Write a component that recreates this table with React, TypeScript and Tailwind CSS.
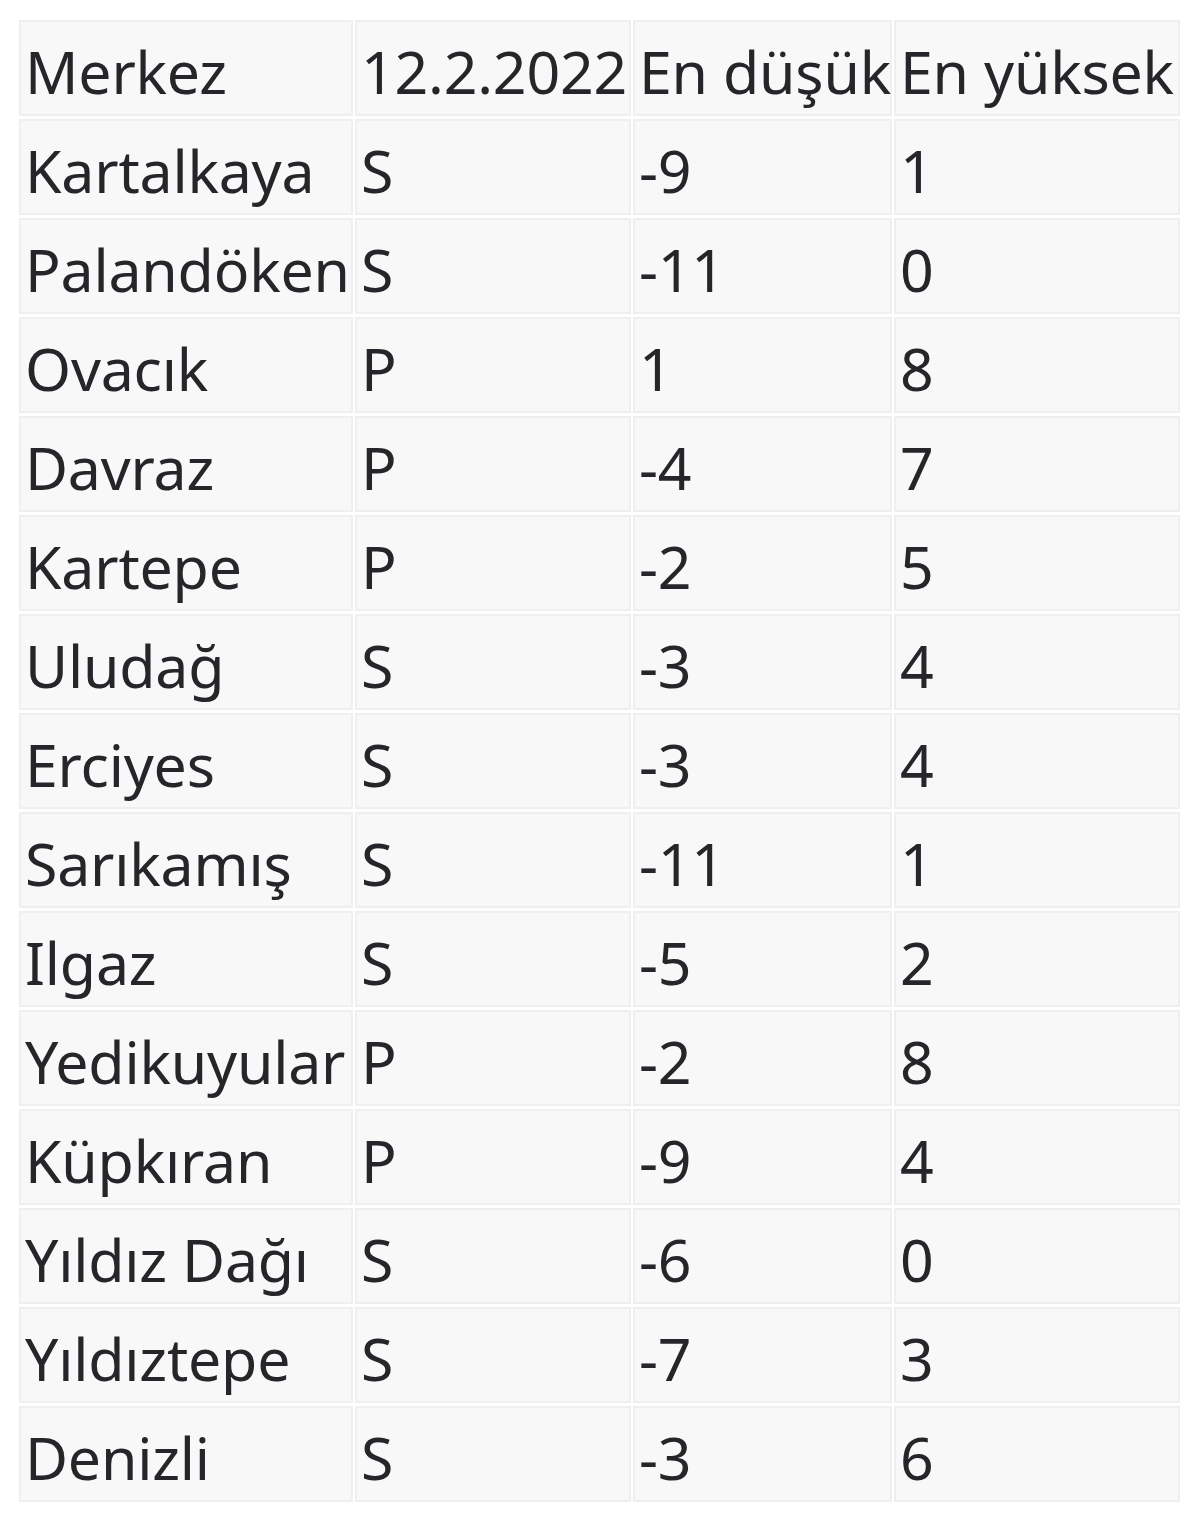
import React from "react";

const rows: string[][] = [
  ["Merkez", "12.2.2022", "En düşük", "En yüksek"],
  ["Kartalkaya", "S", "-9", "1"],
  ["Palandöken", "S", "-11", "0"],
  ["Ovacık", "P", "1", "8"],
  ["Davraz", "P", "-4", "7"],
  ["Kartepe", "P", "-2", "5"],
  ["Uludağ", "S", "-3", "4"],
  ["Erciyes", "S", "-3", "4"],
  ["Sarıkamış", "S", "-11", "1"],
  ["Ilgaz", "S", "-5", "2"],
  ["Yedikuyular", "P", "-2", "8"],
  ["Küpkıran", "P", "-9", "4"],
  ["Yıldız Dağı", "S", "-6", "0"],
  ["Yıldıztepe", "S", "-7", "3"],
  ["Denizli", "S", "-3", "6"],
];

export default function App() {
  return (
    <div className="w-[1200px] h-[1530px] bg-white pt-[20px] pl-[19px]" style={{ fontFamily: '"Noto Sans", "Open Sans", sans-serif' }}>
      <div className="grid grid-cols-[334px_276px_259px_286px] gap-x-[2px] gap-y-[3px]">
        {rows.map((r, i) =>
          r.map((c, j) => (
            <div
              key={i + "-" + j}
              className="h-[96px] border-2 border-[#efefef] bg-[#f8f8f8] flex items-center pl-[4px] pt-[6px] text-[59px] leading-none text-[#26262a] whitespace-nowrap overflow-visible tracking-[-0.2px]"
            >
              {c}
            </div>
          ))
        )}
      </div>
    </div>
  );
}
